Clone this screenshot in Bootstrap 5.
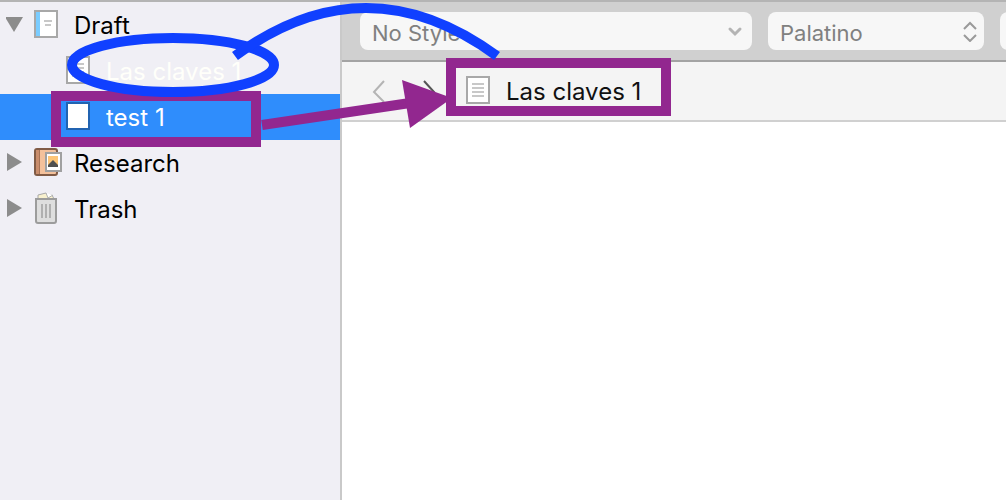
<!DOCTYPE html>
<html lang="en">
<head>
<meta charset="utf-8">
<meta name="viewport" content="width=device-width, initial-scale=1">
<title>Draft</title>
<link href="https://cdn.jsdelivr.net/npm/bootstrap@5.3.0/dist/css/bootstrap.min.css" rel="stylesheet">
<style>
  body { font-family: Inter, "Liberation Sans", sans-serif; font-size: 24px; line-height: 32px; color: #000; background: #fff; }
  .app { border-top: 2px solid #b4b4b4; }
  .binder { width: 342px; background: #f0eff5; border-right: 2px solid #c9c9c9; }
  .binder-row { height: 46px; padding-left: 6px; color: #000; text-decoration: none; }
  .binder-row svg { flex: none; margin-bottom: 2px; }
  .binder-row span, .doc-title { padding-top: 2px; }
  .twisty { width: 28px; }
  .item-icon { width: 40px; }
  .binder-row.child { padding-left: 66px; color: #fffffa; }
  .binder-row.selected { background: #2f8dfc; color: #fff; }
  .format-bar { height: 60px; gap: 16px; padding: 0 18px; background: #d0d0d0; border-bottom: 2px solid #a3a3a3; }
  .picker { flex: none; position: relative; }
  .picker select { height: 38px; font-size: 22px; line-height: 38px; padding: 2px 12px 0; color: #808080; background: #f7f7f7; border: 0; border-radius: 8px; appearance: none; width: 100%; display: block; }
  .picker svg { position: absolute; right: 6px; top: 8px; pointer-events: none; }
  .style-picker { width: 392px; }
  .font-picker { width: 216px; }
  .doc-header { height: 60px; padding-left: 28px; background: #f4f4f4; border-bottom: 2px solid #d0d0d0; color: #111; }
  .doc-header svg { margin-bottom: 2px; }
  .nav-arrow { width: 18px; margin-right: 30px; }
  .doc-title { font-size: 24px; line-height: 32px; }
  .marks { left: 0; top: 0; pointer-events: none; }
</style>
<script src="https://cdn.jsdelivr.net/npm/bootstrap@5.3.0/dist/js/bootstrap.bundle.min.js"></script>
</head>
<body>
<div class="app d-flex min-vh-100 position-relative overflow-hidden">
  <nav class="binder flex-shrink-0" aria-label="Binder">
    <a href="#" class="binder-row d-flex align-items-center">
      <svg class="twisty" width="28" height="28"><path d="M-1 7H17L8 22Z" fill="#8c8c8c"/></svg>
      <svg class="item-icon" width="40" height="28"><rect x="1" y="1" width="22" height="26" fill="#fff"/><path d="M1 1H6V27H1Z" fill="#7accff"/><rect x="1" y="1" width="22" height="26" fill="none" stroke="#a8a8a8" stroke-width="2"/><path d="M10 11H18M11 15H17" stroke="#c8c8c8" stroke-width="2"/></svg>
      <span>Draft</span>
    </a>
    <a href="#" class="binder-row child d-flex align-items-center">
      <svg class="item-icon" width="40" height="28"><rect x="1" y="1" width="22" height="26" fill="#fff" stroke="#a8a8a8" stroke-width="2"/><path d="M6 8H18M6 12H18M6 16H18M6 20H18" stroke="#c8c8c8" stroke-width="2"/></svg>
      <span>Las claves 1</span>
    </a>
    <a href="#" class="binder-row child selected d-flex align-items-center" aria-current="true">
      <svg class="item-icon" width="40" height="28"><rect x="1" y="1" width="22" height="26" fill="#fff" stroke="#2163b1" stroke-width="2"/></svg>
      <span>test 1</span>
    </a>
    <a href="#" class="binder-row d-flex align-items-center">
      <svg class="twisty" width="28" height="28"><path d="M1 5V23L16 14Z" fill="#8c8c8c"/></svg>
      <svg class="item-icon" width="40" height="28"><rect x="1" y="1" width="22" height="26" rx="2" fill="#f4c19b" stroke="#805b45" stroke-width="2"/><path d="M2 2H5V26H2Z" fill="#c98d6c"/><path d="M5.500 2V26" stroke="#a87355"/><rect x="12" y="5" width="15" height="18" fill="#fff" stroke="#a0a0a0" stroke-width="2"/><path d="M14 8H24V19H14Z" fill="#fdc577"/><path d="M14 19V17L19 12L24 17V19Z" fill="#505050"/></svg>
      <span>Research</span>
    </a>
    <a href="#" class="binder-row d-flex align-items-center">
      <svg class="twisty" width="28" height="28"><path d="M1 5V23L16 14Z" fill="#8c8c8c"/></svg>
      <svg class="item-icon" width="40" height="32"><path d="M4 7L4 3L12 1L14 3L18 3L20 7Z" fill="#f8f1cf" stroke="#a8a8a8"/><path d="M12 1L14 6L19 3" fill="#fff" stroke="#b0b0b0"/><path d="M2 7H22V29Q22 31 20 31H4Q2 31 2 29Z" fill="#dedede" stroke="#9c9c9c" stroke-width="2"/><path d="M8 12V26M12 12V26M16 12V26" stroke="#b0b0b0" stroke-width="2"/></svg>
      <span>Trash</span>
    </a>
  </nav>

  <main class="flex-grow-1 overflow-hidden">
    <div class="format-bar d-flex align-items-center">
      <div class="picker style-picker">
        <select aria-label="Style"><option>No Style</option></select>
        <svg width="22" height="22"><path d="M6 9L11 14L16 9" fill="none" stroke="#b4b4b4" stroke-width="3" stroke-linecap="round"/></svg>
      </div>
      <div class="picker font-picker">
        <select aria-label="Font"><option>Palatino</option></select>
        <svg width="16" height="22"><path d="M2 9L8 3L14 9M2 15L8 21L14 15" fill="none" stroke="#9a9a9a" stroke-width="2"/></svg>
      </div>
      <div class="picker font-picker">
        <select aria-label="Typeface"><option></option></select>
      </div>
    </div>
    <header class="doc-header d-flex align-items-center">
      <button type="button" class="nav-arrow border-0 bg-transparent p-0 d-flex" aria-label="Back"><svg width="18" height="24"><path d="M14 3L4 14L14 24" fill="none" stroke="#b4b4b4" stroke-width="2"/></svg></button>
      <button type="button" class="nav-arrow border-0 bg-transparent p-0 d-flex" aria-label="Forward"><svg width="18" height="24"><path d="M6 3L16 14L6 24" fill="none" stroke="#555" stroke-width="2"/></svg></button>
      <svg class="item-icon" width="40" height="28"><rect x="1" y="1" width="22" height="26" fill="#fff" stroke="#a8a8a8" stroke-width="2"/><path d="M6 8H18M6 12H18M6 16H18M6 20H18" stroke="#c8c8c8" stroke-width="2"/></svg>
      <h1 class="doc-title mb-0 fw-normal">Las claves 1</h1>
    </header>
  </main>

  <!-- Hand annotations laid over the window; canvas starts below the 2px top edge -->
  <svg class="marks position-absolute" width="700" height="160" viewBox="0 2 700 160" fill="none" stroke-width="10" aria-hidden="true">
    <g stroke="#92278f">
      <rect x="56" y="96" width="200" height="46"/>
      <rect x="451" y="63" width="215" height="48"/>
      <path d="M262 125L410 103"/>
      <path d="M402 80L452 98L410 128Z" fill="#92278f" stroke="none"/>
    </g>
    <g stroke="#1040ff">
      <ellipse cx="173" cy="65" rx="101" ry="27"/>
      <path d="M235 56Q366 -40 497 56"/>
    </g>
  </svg>
</div>
</body>
</html>
